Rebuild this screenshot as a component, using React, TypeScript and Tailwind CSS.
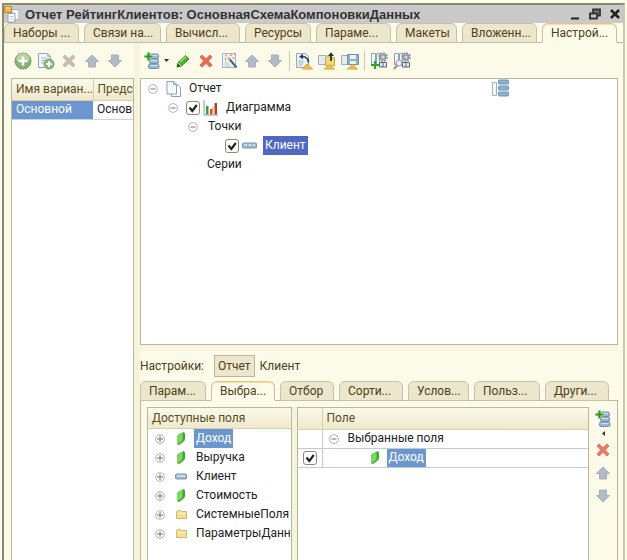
import React, { useState } from "react";

type IconProps = { className?: string };

const PlusCircle = () => (
  <svg viewBox="0 0 18 18" className="size-[18px]">
    <circle cx="9" cy="9" r="8" fill="#86b272" stroke="#7c9a6c" />
    <path d="M2 8a7 7 0 0 1 14 0q-7 4-14 0z" fill="#b4d3a2" />
    <path d="M9 4.500v9M4.500 9h9" stroke="#fff" strokeWidth="2.600" />
  </svg>
);

const CopyPlus = () => (
  <svg viewBox="0 0 18 18" className="size-[18px]">
    <path d="M1.500 1.500h9l3 3v11h-12z" fill="#f1f6fa" stroke="#92a8b8" />
    <path d="M10.500 1.500v3h3M4 6h6M4 8.500h5M4 11h4" fill="none" stroke="#a5bccb" />
    <circle cx="12" cy="12" r="5" fill="#8fb97a" stroke="#7b9f69" />
    <path d="M12 9v6M9 12h6" stroke="#fff" strokeWidth="1.800" />
  </svg>
);

const Cross = ({ className = "" }: IconProps) => (
  <svg viewBox="0 0 14 14" className={`size-[14px] ${className}`}>
    <path
      d="M1 3l2-2 4 3.600L11 1l2 2-3.600 4L13 11l-2 2-4-3.600L3 13l-2-2 3.600-4z"
      fill="currentColor"
      stroke="currentColor"
      strokeLinejoin="round"
    />
  </svg>
);

const Arrow = ({ className = "" }: IconProps) => (
  <svg viewBox="0 0 16 14" className={`h-[14px] w-4 ${className}`}>
    <path
      d="M8 1l6.500 6.500H11.500V13h-7V7.500H1.500z"
      fill="#b0bbc4"
      stroke="#a3b0ba"
      strokeLinejoin="round"
    />
  </svg>
);

const AddRows = () => (
  <svg viewBox="0 0 16 18" className="h-[18px] w-4">
    <g fill="#9db9cf" stroke="#7390aa">
      <rect x="4.500" y="2" width="10" height="4.500" rx="1.500" />
      <rect x="5.500" y="7" width="9" height="4.500" rx="1.500" />
      <rect x="4.500" y="12" width="10.500" height="4.500" rx="1.500" />
    </g>
    <path d="M7 3.500h6M7 8.500h6M6.500 13.500h7" stroke="#d3e2ee" />
    <path d="M4.500 .5v8M.5 4.500h8" stroke="#dcebd0" strokeWidth="3.500" />
    <path d="M4.500 .5v8M.5 4.500h8" stroke="#2f9c1c" strokeWidth="2.200" />
  </svg>
);

const Pencil = () => (
  <svg viewBox="0 0 14 14" className="size-[14px]">
    <path d="M1 13l1-4.500L9.500 1.500 13 5l-7.500 7z" fill="#4cae34" stroke="#36881f" strokeLinejoin="round" />
    <path d="M4 8l6-5.500" stroke="#a3df86" strokeWidth="1.500" />
    <path d="M1 13l1-4 2.800 3z" fill="#2c4a22" />
    <path d="M2 9l3 3" stroke="#f1e6bb" />
  </svg>
);

const Wand = () => (
  <svg viewBox="0 0 17 17" className="size-[17px]">
    <path d="M1.500 1.500h13v14h-13z" fill="#eef4f8" stroke="#a3b6c4" />
    <path d="M3.500 10h3M3.500 12h5M3.500 14h6" stroke="#b6c9d6" />
    <path d="M8 6.500l7.500 9" stroke="#44617b" strokeWidth="2" />
    <path d="M7 5.500l2 2.200" stroke="#e5ad52" strokeWidth="2.200" />
    <g fill="#f08b7e">
      <circle cx="5" cy="3.500" r=".9" />
      <circle cx="10" cy="3" r="1" />
      <circle cx="14" cy="2" r="1.100" />
      <circle cx="12.500" cy="6" r="1" />
      <circle cx="4.500" cy="7" r=".9" />
    </g>
  </svg>
);

const PageBack = () => (
  <svg viewBox="0 0 18 18" className="size-[18px]">
    <path d="M1.500 1.500h9l3 3v11h-12z" fill="#eaf1f7" stroke="#94a8b8" />
    <path d="M3.500 9h5M3.500 11h5M3.500 13h4" stroke="#9cb5ca" />
    <path d="M6 4.500q7-.5 7.500 6" fill="none" stroke="#26384c" strokeWidth="1.600" />
    <path d="M4 4.700l4-3v5.500z" fill="#26384c" />
    <path d="M7.500 17l4.500-5 5.500 5z" fill="#ecc04d" stroke="#d3a63c" />
  </svg>
);

const FolderOut = () => (
  <svg viewBox="0 0 18 18" className="size-[18px]">
    <path d="M.5 3.500h8v9h-8z" fill="#e5edf4" stroke="#9aafc0" />
    <path d="M7.500 5.500l1-1.500h3l1 1.500h4v8h-9z" fill="#f3d77b" stroke="#c9a545" />
    <path d="M13 9V3" stroke="#223448" strokeWidth="1.800" />
    <path d="M10 4l3-3.800L16 4z" fill="#223448" />
    <path d="M6.500 17l5-4.500 5 4.500z" fill="#ecc04d" stroke="#d3a63c" />
  </svg>
);

const DiskSave = () => (
  <svg viewBox="0 0 18 18" className="size-[18px]">
    <path d="M.5 3.500h8v9h-8z" fill="#e5edf4" stroke="#9aafc0" />
    <path d="M6.500 2.500h11v10h-11z" fill="#8fb0ca" stroke="#6f90ad" />
    <path d="M9 3h6v4H9zM9 9h6v3H9z" fill="#e9f1f7" />
    <path d="M6.500 17l5-4.500 5 4.500z" fill="#ecc04d" stroke="#d3a63c" />
  </svg>
);

const GearTable = ({ find = false }: { find?: boolean }) => (
  <svg viewBox="0 0 18 18" className="size-[18px]">
    <path d="M1.500 1.500h4v11h-4zM6.500 1.500h3v11h-3z" fill="#f2f7fb" stroke="#8fa3b6" />
    <path d="M9.500 10.500h7v4.500h-7z" fill="#e4edf5" stroke="#4e6580" />
    <path d="M13 10.500v4.500" stroke="#4e6580" />
    <circle cx="13" cy="5" r="4" fill="none" stroke="#8b929c" strokeWidth="1.600" strokeDasharray="2 1.100" />
    <circle cx="13" cy="5" r="2.500" fill="#d6dae0" stroke="#969ca6" strokeWidth="1.800" />
    {find ? (
      <>
        <path d="M1 17l3-3.500" stroke="#b3856d" strokeWidth="2" />
        <circle cx="6" cy="11" r="3" fill="#f5edf0" stroke="#a69aa2" strokeWidth="1.200" />
      </>
    ) : (
      <path d="M5 9v8M1 13h8" stroke="#32a51e" strokeWidth="2.200" />
    )}
  </svg>
);

const Expander = ({ open = false }: { open?: boolean }) => (
  <button aria-label={open ? "Свернуть" : "Развернуть"} className="flex size-[10px] shrink-0">
    <svg viewBox="0 0 10 10" className="size-[10px]">
      <circle cx="5" cy="5" r="4.400" fill="#fdfdfd" stroke="#aaa" strokeWidth=".9" />
      <path d={open ? "M2.500 5h5" : "M2 5h6M5 2v6"} stroke="#777" />
    </svg>
  </button>
);

const Pages = () => (
  <svg viewBox="0 0 15 16" className="h-4 w-[15px] shrink-0">
    <path d="M5.500 3.500h6l3 3v9h-9z" fill="#fff" stroke="#8ba4b6" />
    <path d="M1 .5h6.500l3 3v9.500H1z" fill="#f8fbfd" stroke="#8ba4b6" />
    <path d="M7.500 .5v3h3" fill="none" stroke="#8ba4b6" />
  </svg>
);

const Chart = () => (
  <svg viewBox="0 0 15 16" className="h-4 w-[15px] shrink-0">
    <path d="M1 0v15h14" fill="none" stroke="#8c9aa4" />
    <path d="M3 6h2.500v8.500H3z" fill="#3f9b46" />
    <path d="M7 9h2v5.500H7z" fill="#d94c35" />
    <path d="M9 7h1.500v7.500H9z" fill="#e9b53f" />
    <path d="M11.500 3H14v11.500h-2.500z" fill="#b63b33" />
  </svg>
);

const Bar = ({ split = false }: { split?: boolean }) => (
  <svg viewBox={split ? "0 0 15 7" : "0 0 12 7"} className={`h-[7px] shrink-0 ${split ? "w-[15px]" : "w-3"}`}>
    <rect x=".5" y="1" width={split ? 14 : 11} height="5" rx="1" fill="#9db6ca" stroke="#8199af" />
    <path d={split ? "M2 3h3M6.500 3h3M11 3h2" : "M2 3h8"} stroke="#dbe8f2" strokeWidth="1.500" />
  </svg>
);

const Leaf = () => (
  <svg viewBox="0 0 8 13" className="h-[13px] w-2 shrink-0">
    <path d="M0 5.500Q0 3 3 2l3-1.700Q8 0 8 2v5q0 2-2 3l-4 3Q0 13 0 11z" fill="#3da62b" />
    <path d="M0 5.500Q1 3 3 2l2.500-1v7.500L1 12Q0 12.500 0 11z" fill="#7bd95f" />
  </svg>
);

const Folder = () => (
  <svg viewBox="0 0 11 9" className="h-[9px] w-[11px] shrink-0">
    <path d="M.5 1.500l1-1h3l1 1h5v7H.5z" fill="#f7df93" stroke="#d3b76c" />
    <path d="M2 3.500h7" stroke="#fdf3c9" />
  </svg>
);

const Structure = () => (
  <svg viewBox="0 0 18 18" className="size-[18px]">
    <path d="M1.500 3.500h4v13h-4z" fill="#f3f7fa" stroke="#9fb2c2" />
    <g fill="#8fb2cc" stroke="#6d94b2">
      <rect x="7.500" y="1" width="10" height="4" rx="1" />
      <rect x="7.500" y="7" width="10" height="4" rx="1" />
      <rect x="7.500" y="13" width="10" height="4" rx="1" />
    </g>
    <path d="M9 5.500v1M16 5.500v1M9 11.500v1M16 11.500v1" stroke="#9db9cd" />
  </svg>
);

const AppIcon = () => (
  <svg viewBox="0 0 17 17" className="size-[17px]">
    <path d="M8 3.500h7v10H8z" fill="#f4f8fb" stroke="#a2b6c5" />
    <path d="M4 7.500h7v8.500H4z" fill="#fff" stroke="#8aa3b5" />
    <path d="M5.500 10.500h4M5.500 13h4" stroke="#b4c6d2" />
    <path d="M.5 .5h7v6h-7z" fill="#f0b648" stroke="#c08c34" />
    <path d="M2 2h4" stroke="#fbe1a0" />
  </svg>
);

const Tick = ({ label }: { label: string }) => {
  const [on, setOn] = useState(true);
  return (
    <span className="relative flex size-[14px] shrink-0">
      <input
        type="checkbox"
        aria-label={label}
        checked={on}
        onChange={() => setOn(!on)}
        className="size-[14px] appearance-none rounded-[3px] border border-[#8f8a6c] bg-white"
      />
      {on && (
        <svg viewBox="0 0 14 14" className="pointer-events-none absolute inset-0">
          <path d="M3.500 6.500l2.800 3.500 4.500-6" fill="none" stroke="#222" strokeWidth="2.200" />
        </svg>
      )}
    </span>
  );
};

const IconButton = ({ label, children }: { label: string; children: React.ReactNode }) => (
  <button aria-label={label} className="flex size-[18px] shrink-0 items-center justify-center">
    {children}
  </button>
);

type Tab = { text: string; width: string };

const mainTabs: Tab[] = [
  { text: "Наборы ...", width: "w-[75px]" },
  { text: "Связи на...", width: "w-[77px]" },
  { text: "Вычисл...", width: "w-[74px]" },
  { text: "Ресурсы", width: "w-[66px]" },
  { text: "Параме...", width: "w-[75px]" },
  { text: "Макеты", width: "w-[61px]" },
  { text: "Вложенн...", width: "w-[75px]" },
  { text: "Настрой...", width: "w-[75px]" },
];

const settingTabs: Tab[] = [
  { text: "Парам...", width: "w-[66px]" },
  { text: "Выбра...", width: "w-[64px]" },
  { text: "Отбор", width: "w-[54px]" },
  { text: "Сорти...", width: "w-[64px]" },
  { text: "Услов...", width: "w-[61px]" },
  { text: "Польз...", width: "w-[66px]" },
  { text: "Други...", width: "w-[64px]" },
];

const Tabs = ({ items, active }: { items: Tab[]; active: number }) => (
  <div role="tablist" className="flex h-5 shrink-0 gap-[5px] border-b border-[#bdb999]">
    {items.map((t, i) => (
      <button
        key={t.text}
        role="tab"
        aria-selected={i === active}
        className={`${t.width} h-5 overflow-hidden rounded-t-md border border-[#c6c2a6] pl-2 text-left whitespace-nowrap text-[#4e4119] ${
          i === active
            ? "border-b-transparent border-t-[#e9c57c] bg-[#fcfbe9] shadow-[inset_0_1px_0_#f7dfab]"
            : "bg-[#ebe6cc]"
        }`}
      >
        {t.text}
      </button>
    ))}
  </div>
);

const fields = [
  { text: "Доход", icon: "leaf" },
  { text: "Выручка", icon: "leaf" },
  { text: "Клиент", icon: "bar" },
  { text: "Стоимость", icon: "leaf" },
  { text: "СистемныеПоля", icon: "folder" },
  { text: "ПараметрыДанных", icon: "folder" },
];

const headFill = "bg-linear-to-b from-[#faf9ea] to-[#efe9cb] text-[#5c4d1e]";

export default function App() {
  return (
    <div className="flex h-screen w-full flex-col overflow-hidden bg-[#fcfbe9] pt-[3px] pr-[2px] pl-[2px] font-['Roboto','Liberation_Sans',sans-serif] text-[12px] leading-[17px] text-[#222]">
      <div className="flex min-h-0 flex-1 flex-col border-t-2 border-r-2 border-l-2 border-[#8a8971] border-r-[#c9c6aa]">
        <header className="flex h-[18px] shrink-0 items-center bg-[#c9c9c9] pr-[2px]">
          <AppIcon />
          <h1 className="ml-1 flex-1 truncate font-['Liberation_Sans',sans-serif] text-[13px] font-bold text-[#333]">
            Отчет РейтингКлиентов: ОсновнаяСхемаКомпоновкиДанных
          </h1>
          <div className="flex gap-2">
            <button aria-label="Свернуть окно" className="size-3">
              <svg viewBox="0 0 12 12"><path d="M2 10.500h8" stroke="#222" strokeWidth="2" /></svg>
            </button>
            <button aria-label="Восстановить" className="size-3">
              <svg viewBox="0 0 12 12">
                <path d="M4 1.500h7v6H4z" fill="#777" stroke="#333" strokeWidth="1.800" />
                <path d="M1 5.500h7v5H1z" fill="#c9c9c9" stroke="#333" strokeWidth="1.800" />
              </svg>
            </button>
            <button aria-label="Закрыть" className="size-3">
              <svg viewBox="0 0 12 12"><path d="M2 2l8 8M10 2l-8 8" stroke="#222" strokeWidth="2.500" /></svg>
            </button>
          </div>
        </header>

        <Tabs items={mainTabs} active={7} />

        <main className="flex min-h-0 flex-1 pr-[5px] pl-[7px]">
          <section className="flex w-[123px] shrink-0 flex-col">
            <div className="flex h-[35px] shrink-0 items-center gap-[5px] pl-[3px]">
              <IconButton label="Добавить"><PlusCircle /></IconButton>
              <IconButton label="Скопировать"><CopyPlus /></IconButton>
              <IconButton label="Удалить"><Cross className="text-[#c8bab5]" /></IconButton>
              <IconButton label="Вверх"><Arrow /></IconButton>
              <IconButton label="Вниз"><Arrow className="rotate-180" /></IconButton>
            </div>
            <div className="flex-1 overflow-hidden border-t border-r border-l border-[#b9b69a] bg-white">
              <table className="w-[160px] table-fixed border-collapse text-left whitespace-nowrap">
                <thead>
                  <tr className={`h-[21px] ${headFill}`}>
                    <th className="w-[81px] border-r border-b border-[#d6d0ac] p-0 pl-1 font-normal">Имя вариан...</th>
                    <th className="border-b border-[#d6d0ac] pl-1 font-normal">Представление</th>
                  </tr>
                </thead>
                <tbody>
                  <tr className="h-[19px]">
                    <td className="border-b border-[#c4d3e6] bg-[#6c96cf] pl-1 text-white">Основной</td>
                    <td className="border-b border-[#c4d3e6] pl-1">Основной</td>
                  </tr>
                </tbody>
              </table>
            </div>
          </section>

          <div className="w-[6px] shrink-0 bg-[#f6f3dc]" />

          <section className="flex min-w-0 flex-1 flex-col">
            <div className="flex h-[35px] shrink-0 items-center gap-[5px] pl-[3px]">
              <div className="flex items-center gap-[3px]">
                <IconButton label="Добавить элемент"><AddRows /></IconButton>
                <svg viewBox="0 0 5 3" className="h-[3px] w-[5px]"><path d="M0 0h5L2.500 3z" fill="#333" /></svg>
              </div>
              <IconButton label="Изменить"><Pencil /></IconButton>
              <IconButton label="Удалить элемент"><Cross className="text-[#e56b5c]" /></IconButton>
              <IconButton label="Мастер"><Wand /></IconButton>
              <IconButton label="Поднять"><Arrow /></IconButton>
              <IconButton label="Опустить"><Arrow className="rotate-180" /></IconButton>
              <div className="h-5 w-px bg-[#cfcbb0]" />
              <IconButton label="Стандартные настройки"><PageBack /></IconButton>
              <IconButton label="Загрузить настройки"><FolderOut /></IconButton>
              <IconButton label="Сохранить настройки"><DiskSave /></IconButton>
              <div className="h-5 w-px bg-[#cfcbb0]" />
              <IconButton label="Добавить настройки"><GearTable /></IconButton>
              <IconButton label="Найти настройки"><GearTable find /></IconButton>
            </div>

            <div className="flex h-[267px] shrink-0 justify-between border border-[#b9b69a] bg-white">
              <ul className="pl-[7px]">
                <li className="flex h-[19px] items-center">
                  <Expander open />
                  <span className="ml-2 flex"><Pages /></span>
                  <span className="ml-2">Отчет</span>
                </li>
                <li className="flex h-[19px] items-center pl-5">
                  <Expander open />
                  <span className="ml-2 flex items-center gap-[3px]"><Tick label="Диаграмма" /><Chart /></span>
                  <span className="ml-2">Диаграмма</span>
                </li>
                <li className="flex h-[19px] items-center pl-10">
                  <Expander open />
                  <span className="ml-[10px]">Точки</span>
                </li>
                <li className="flex h-[19px] items-center pl-[77px]">
                  <span className="flex items-center gap-[3px]"><Tick label="Клиент" /><Bar split /></span>
                  <span className="ml-[6px] flex h-[19px] items-center bg-[#4e68c4] px-[2px] text-white">Клиент</span>
                </li>
                <li className="flex h-[19px] items-center pl-[59px]">Серии</li>
              </ul>
              <div className="mr-[108px]"><Structure /></div>
            </div>

            <div className="h-[6px] shrink-0 bg-[#f8f5df]" />
            <div className="flex h-[30px] shrink-0 items-center text-[#4e4119]">
              <span>Настройки:</span>
              <button className="ml-[10px] h-[22px] border border-[#bbb797] bg-[#ebe6cc] px-[3px]">Отчет</button>
              <button className="ml-[5px]">Клиент</button>
            </div>

            <Tabs items={settingTabs} active={1} />

            <div className="flex min-h-0 flex-1 border-r border-l border-[#bdb999] pt-[6px] pr-1 pl-[6px]">
              <div className="w-[145px] shrink-0 overflow-hidden border border-b-0 border-[#b9b69a] bg-white">
                <div className={`flex h-[21px] items-center border-b border-[#d6d0ac] pl-1 ${headFill}`}>Доступные поля</div>
                <ul>
                  {fields.map((f, i) => (
                    <li key={f.text} className="flex h-[19px] items-center pl-[7px] whitespace-nowrap">
                      <Expander />
                      <span className="ml-2 flex w-4 shrink-0 justify-center">
                        {f.icon === "leaf" ? <Leaf /> : f.icon === "bar" ? <Bar /> : <Folder />}
                      </span>
                      <span className={`ml-[5px] flex h-[19px] items-center px-[2px] ${i === 0 ? "bg-[#6c96cf] text-white" : ""}`}>
                        {f.text}
                      </span>
                    </li>
                  ))}
                </ul>
              </div>
              <div className="w-[5px] shrink-0 bg-[#f6f3dc]" />
              <div className="min-w-0 flex-1 border border-b-0 border-[#b9b69a] bg-white">
                <table className="w-full table-fixed border-collapse text-left">
                  <thead>
                    <tr className={`h-[21px] ${headFill}`}>
                      <th aria-label="Использование" className="w-[24px] border-r border-b border-[#d6d0ac]" />
                      <th className="border-b border-[#d6d0ac] pl-1 font-normal">Поле</th>
                    </tr>
                  </thead>
                  <tbody>
                    <tr className="h-[19px]">
                      <td className="border-r border-b border-[#b9cce2]" />
                      <td className="border-b border-[#b9cce2] p-0">
                        <div className="flex h-[18px] items-center pl-[6px]"><Expander open /><span className="ml-[9px]">Выбранные поля</span></div>
                      </td>
                    </tr>
                    <tr className="h-[19px]">
                      <td className="border-r border-b border-[#b9cce2] p-0"><div className="flex justify-center"><Tick label="Доход" /></div></td>
                      <td className="border-b border-[#b9cce2] p-0">
                        <div className="flex h-[18px] items-center pl-12"><Leaf /><span className="ml-2 flex h-[18px] items-center bg-[#6c96cf] px-[2px] text-white">Доход</span></div>
                      </td>
                    </tr>
                  </tbody>
                </table>
              </div>
              <div className="flex w-6 shrink-0 flex-col items-center gap-[5px] pt-[3px] pl-1">
                <div className="flex flex-col items-center gap-[3px]">
                  <IconButton label="Добавить поле"><AddRows /></IconButton>
                  <svg viewBox="0 0 3 5" className="h-[5px] w-[3px]"><path d="M3 0v5L0 2.500z" fill="#333" /></svg>
                </div>
                <IconButton label="Удалить поле"><Cross className="text-[#e87868]" /></IconButton>
                <IconButton label="Поднять поле"><Arrow /></IconButton>
                <IconButton label="Опустить поле"><Arrow className="rotate-180" /></IconButton>
              </div>
            </div>
          </section>
        </main>
      </div>
    </div>
  );
}
